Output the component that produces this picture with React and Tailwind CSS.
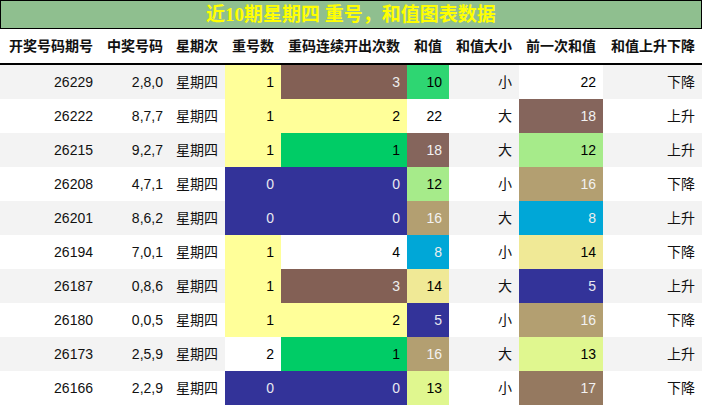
import React from "react";

const rows = [
    ["26229", "2,8,0", 1, 3, 10, "小", 22, "下降"],
    ["26222", "8,7,7", 1, 2, 22, "大", 18, "上升"],
    ["26215", "9,2,7", 1, 1, 18, "大", 12, "上升"],
    ["26208", "4,7,1", 0, 0, 12, "小", 16, "下降"],
    ["26201", "8,6,2", 0, 0, 16, "大", 8, "上升"],
    ["26194", "7,0,1", 1, 4, 8, "小", 14, "下降"],
    ["26187", "0,8,6", 1, 3, 14, "大", 5, "上升"],
    ["26180", "0,0,5", 1, 2, 5, "小", 16, "下降"],
    ["26173", "2,5,9", 2, 1, 16, "大", 13, "上升"],
    ["26166", "2,2,9", 0, 0, 13, "小", 17, "下降"],
];

// 重码连续开出次数
const countCls = {
    0: "bg-[#333399] text-[#e8e8f0]",
    1: "bg-[#00cc66] text-black",
    2: "bg-[#ffff99] text-black",
    3: "bg-[#836055] text-[#eeeeee]",
    4: "bg-white text-black",
};
// 重号数
const repeatCls = {
    0: "bg-[#333399] text-[#e8e8f0]",
    1: "bg-[#ffff99] text-black",
    2: "bg-white text-black",
};
// 和值
const sumCls = {
    5: "bg-[#333399] text-[#e8e8f0]",
    8: "bg-[#00a7d7] text-[#eeeeee]",
    10: "bg-[#2ed672] text-black",
    12: "bg-[#a6eb8a] text-black",
    13: "bg-[#e0f78f] text-black",
    14: "bg-[#f0e996] text-black",
    16: "bg-[#b39f71] text-[#f2f2f2]",
    17: "bg-[#957960] text-[#f2f2f2]",
    18: "bg-[#85655c] text-[#f2f2f2]",
    22: "bg-white text-black",
};

const headers = [
    "开奖号码期号",
    "中奖号码",
    "星期次",
    "重号数",
    "重码连续开出次数",
    "和值",
    "和值大小",
    "前一次和值",
    "和值上升下降",
];

const cols = "grid grid-cols-[100px_70px_55px_56px_126px_42px_70px_84px_99px]";

const App = () => {
    return (
        <div className="w-[702px] h-[406px] bg-white overflow-hidden font-['Liberation_Sans','Noto_Sans_CJK_SC',sans-serif] text-[14px] text-[#111]">
            <div className="h-[29px] border border-black bg-[#8fbf8f] flex items-center justify-center">
                <span className="text-[19px] font-bold text-[#ffff00] font-['Liberation_Serif','Noto_Sans_CJK_SC',serif] leading-none">
                    近10期星期四 重号，和值图表数据
                </span>
            </div>
            <div className={`${cols} h-[36px] border-b-2 border-black bg-white`}>
                {headers.map((h) => (
                    <div key={h} className="flex items-center justify-end pr-[7px] font-bold whitespace-nowrap">
                        {h}
                    </div>
                ))}
            </div>
            {rows.map((r, i) => {
                const rowBg = i % 2 === 0 ? "bg-[#f3f3f3]" : "bg-white";
                const cells = [
                    [r[0], ""],
                    [r[1], ""],
                    ["星期四", ""],
                    [r[2], repeatCls[r[2]]],
                    [r[3], countCls[r[3]]],
                    [r[4], sumCls[r[4]]],
                    [r[5], ""],
                    [r[6], sumCls[r[6]]],
                    [r[7], ""],
                ];
                return (
                    <div key={r[0]} className={`${cols} h-[34px] ${rowBg}`}>
                        {cells.map(([v, c], j) => (
                            <div key={j} className={`flex items-center justify-end pr-[7px] whitespace-nowrap ${c}`}>
                                {v}
                            </div>
                        ))}
                    </div>
                );
            })}
        </div>
    );
};

export default App;
